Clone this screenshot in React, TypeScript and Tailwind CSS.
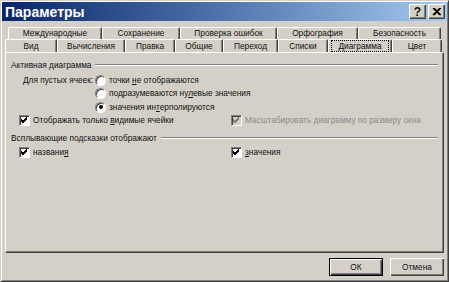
import React from "react";

const FONT = { fontFamily: '"Liberation Sans", Arial, sans-serif' };

const ROW1 = [
  { label: "Международные", w: 94 },
  { label: "Сохранение", w: 78 },
  { label: "Проверка ошибок", w: 97 },
  { label: "Орфография", w: 81 },
  { label: "Безопасность", w: 83 },
];

const ROW2 = [
  { label: "Вид", w: 52 },
  { label: "Вычисления", w: 68 },
  { label: "Правка", w: 50 },
  { label: "Общие", w: 48 },
  { label: "Переход", w: 55 },
  { label: "Списки", w: 50 },
  { label: "Диаграмма", w: 64, active: true },
  { label: "Цвет", w: 50 },
];

function Tab({ label, w, active }: { label: string; w: number; active?: boolean }) {
  return (
    <div
      className="flex h-full items-center justify-center border-t border-l border-r border-t-white border-l-white border-r-[#404040] shadow-[inset_-1px_0_0_#808080] rounded-t-[2px]"
      style={{ width: w }}
    >
      {active ? (
        <span className="border border-dotted border-black px-[6px] leading-[10px]">{label}</span>
      ) : (
        <span className="leading-none">{label}</span>
      )}
    </div>
  );
}

function Radio({ checked }: { checked?: boolean }) {
  return (
    <span className="flex h-[11px] w-[11px] shrink-0 items-center justify-center rounded-full border border-t-[#808080] border-l-[#808080] border-r-white border-b-white bg-white shadow-[inset_1px_1px_0_#404040]">
      {checked && <span className="h-[4px] w-[4px] rounded-full bg-black" />}
    </span>
  );
}

function Check({ disabled }: { disabled?: boolean }) {
  return (
    <span
      className={`flex h-[11px] w-[11px] shrink-0 items-center justify-center border border-t-[#808080] border-l-[#808080] border-r-white border-b-white shadow-[inset_1px_1px_0_#404040] ${
        disabled ? "bg-[#d4d0c8]" : "bg-white"
      }`}
    >
      <svg width="7" height="7" viewBox="0 0 7 7">
        <path d="M0 2 L2 4 L6 0 M0 3 L2 5 L6 1 M0 4 L2 6 L6 2" stroke={disabled ? "#808080" : "#000"} strokeWidth="1" fill="none" shapeRendering="crispEdges" />
      </svg>
    </span>
  );
}

function GroupHeader({ children }: { children: React.ReactNode }) {
  return (
    <div className="flex h-[12px] items-center gap-[4px]">
      <span className="whitespace-nowrap">{children}</span>
      <span className="h-[2px] flex-1 border-t border-t-[#808080] border-b border-b-white" />
    </div>
  );
}

function Btn({ children, def }: { children: React.ReactNode; def?: boolean }) {
  return (
    <div
      className={`flex h-[18px] w-[54px] items-center justify-center bg-[#d4d0c8] ${
        def
          ? "border border-black shadow-[inset_1px_1px_0_#fff,inset_-1px_-1px_0_#404040,inset_-2px_-2px_0_#808080]"
          : "shadow-[inset_1px_1px_0_#fff,inset_-1px_-1px_0_#404040,inset_-2px_-2px_0_#808080]"
      }`}
    >
      {children}
    </div>
  );
}

export default function App() {
  return (
    <div
      className="flex h-[282px] w-[449px] flex-col border border-t-[#d4d0c8] border-l-[#d4d0c8] border-r-[#404040] border-b-[#404040] bg-[#d4d0c8] text-[8.3px] text-[#111] shadow-[inset_1px_1px_0_#fff,inset_-1px_-1px_0_#808080]"
      style={FONT}
    >
      {/* title bar */}
      <div className="mx-[1px] mt-[1px] flex h-[19px] items-center justify-between bg-gradient-to-r from-[#0a246a] to-[#a6caf0] pl-[3px] pr-[2px]">
        <span className="text-[14px] font-bold leading-none text-white">Параметры</span>
        <div className="flex gap-[2px]">
          <div className="flex h-[15px] w-[17px] items-center justify-center bg-[#d4d0c8] text-[12px] font-bold leading-none shadow-[inset_1px_1px_0_#fff,inset_-1px_-1px_0_#404040,inset_-2px_-2px_0_#808080]">
            ?
          </div>
          <div className="flex h-[15px] w-[17px] items-center justify-center bg-[#d4d0c8] shadow-[inset_1px_1px_0_#fff,inset_-1px_-1px_0_#404040,inset_-2px_-2px_0_#808080]">
            <svg width="9" height="8" viewBox="0 0 9 8">
              <path d="M1 0 L8 7 M2 0 L9 7 M8 0 L1 7 M9 0 L2 7" stroke="#000" strokeWidth="1.2" fill="none" />
            </svg>
          </div>
        </div>
      </div>

      {/* tabs */}
      <div className="mt-[6px] flex h-[12px] pl-[7px]">
        {ROW1.map((t) => (
          <Tab key={t.label} {...t} />
        ))}
      </div>
      <div className="flex h-[13px] pl-[4px]">
        {ROW2.map((t) => (
          <Tab key={t.label} {...t} />
        ))}
      </div>

      {/* panel */}
      <div className="mx-[4px] flex h-[201px] flex-col border border-t-white border-l-white border-r-[#404040] border-b-[#404040] px-[5px] pt-[6px] shadow-[inset_-1px_-1px_0_#808080]">
        <GroupHeader>Активная диаграмма</GroupHeader>

        <div className="mt-[2px] flex">
          <span className="ml-[12px] flex h-[14px] w-[72px] shrink-0 items-center whitespace-nowrap">Для пустых ячеек:</span>
          <div className="flex flex-col">
            <div className="flex h-[14px] items-center gap-[3px]">
              <Radio />
              <span>
                точки <span className="underline">н</span>е отображаются
              </span>
            </div>
            <div className="flex h-[13px] items-center gap-[3px]">
              <Radio />
              <span>
                подразумеваются ну<span className="underline">л</span>евые значения
              </span>
            </div>
            <div className="flex h-[14px] items-center gap-[3px]">
              <Radio checked />
              <span>
                значения ин<span className="underline">т</span>ерполируются
              </span>
            </div>
          </div>
        </div>

        <div className="flex h-[13px] items-center">
          <div className="ml-[8px] flex w-[212px] items-center gap-[3px]">
            <Check />
            <span>
              Отображать только <span className="underline">в</span>идимые ячейки
            </span>
          </div>
          <div className="flex items-center gap-[3px] text-[#8a8a8a]">
            <Check disabled />
            <span>Масштабировать диаграмму по размеру окна</span>
          </div>
        </div>

        <div className="mt-[5px]">
          <GroupHeader>Всплывающие подсказки отображают</GroupHeader>
        </div>

        <div className="mt-[2px] flex h-[13px] items-center">
          <div className="ml-[8px] flex w-[212px] items-center gap-[3px]">
            <Check />
            <span>
              названи<span className="underline">я</span>
            </span>
          </div>
          <div className="flex items-center gap-[3px]">
            <Check />
            <span>
              <span className="underline">з</span>начения
            </span>
          </div>
        </div>
      </div>

      {/* buttons */}
      <div className="mt-[5px] flex justify-end gap-[7px] pr-[4px]">
        <Btn def>ОК</Btn>
        <Btn>Отмена</Btn>
      </div>
    </div>
  );
}
